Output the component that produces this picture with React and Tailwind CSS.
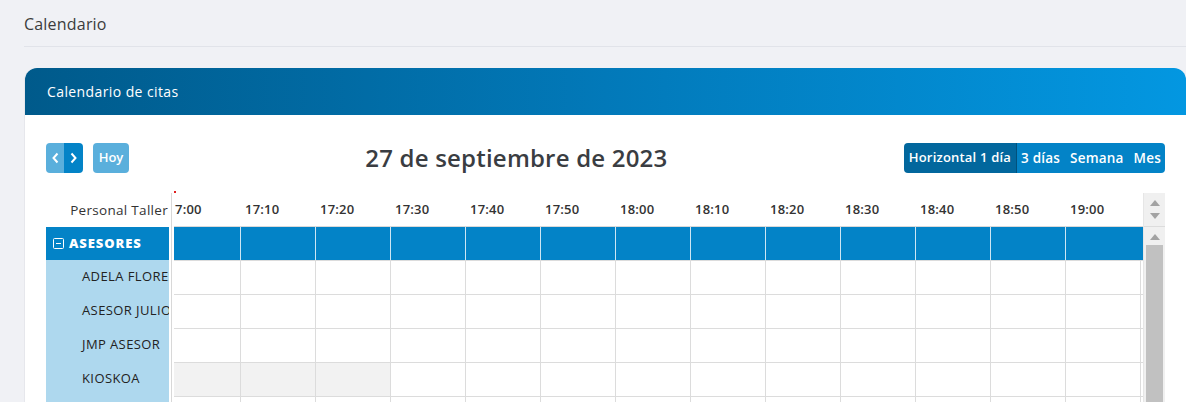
import React from 'react';

const times = ['7:00', '17:10', '17:20', '17:30', '17:40', '17:50', '18:00', '18:10', '18:20', '18:30', '18:40', '18:50', '19:00'];
const people = [
  { name: 'ADELA FLORES', grey: 0 },
  { name: 'ASESOR JULIO', grey: 0 },
  { name: 'JMP ASESOR', grey: 0 },
  { name: 'KIOSKOA', grey: 3 },
  { name: '', grey: 0 },
];

const colWidth = (i) => (i === 0 ? 'w-[67px]' : 'w-[75px]');

function Toolbar() {
  return (
    <div className="flex items-center h-[30px]">
      <div className="flex gap-[10px]">
        <div className="flex rounded-[4px] overflow-hidden h-[30px]">
          <button className="w-[18px] bg-[#5aafdc] flex items-center justify-center">
            <svg width="9" height="12" viewBox="0 0 9 12"><path d="M6.5 1.5 2.5 6l4 4.5" fill="none" stroke="#fff" strokeWidth="2" /></svg>
          </button>
          <button className="w-[19px] bg-[#0383c7] flex items-center justify-center">
            <svg width="9" height="12" viewBox="0 0 9 12"><path d="M2.5 1.5 6.5 6l-4 4.5" fill="none" stroke="#fff" strokeWidth="2" /></svg>
          </button>
        </div>
        <button className="h-[30px] w-[36px] rounded-[4px] bg-[#5aafdc] text-white text-[13px] font-semibold">Hoy</button>
      </div>
      <div className="flex-1 text-center text-[24px] font-semibold text-[#3a3d42] tracking-[0.2px]">27 de septiembre de 2023</div>
      <div className="flex rounded-[4px] overflow-hidden h-[30px] text-white text-[13px] font-semibold tracking-[0.2px]">
        <div className="bg-[#02679d] px-[5px] flex items-center border-r border-[#01517c]">Horizontal 1 día</div>
        <div className="bg-[#0383c7] flex items-center gap-[10px] pl-[4px] pr-[4px] text-[13.5px]">
          <span>3 días</span>
          <span>Semana</span>
          <span>Mes</span>
        </div>
      </div>
    </div>
  );
}

function Grid() {
  return (
    <div className="flex mt-[20px] text-[#222]">
      <div className="w-[123px] shrink-0">
        <div className="h-[34px] flex items-center justify-end overflow-hidden whitespace-nowrap text-[13.5px] tracking-[0.3px] font-medium text-[#333] pr-[1px]">Personal Taller</div>
        <div className="h-[33px] bg-[#0383c7] flex items-center pl-[7px] gap-[5px] text-white">
          <svg width="11" height="11" viewBox="0 0 11 11"><rect x="0.5" y="0.5" width="10" height="10" rx="1" fill="none" stroke="#fff" strokeWidth="1" /><path d="M3 5.5h5" stroke="#fff" strokeWidth="1" /></svg>
          <span className="text-[13px] font-extrabold tracking-[0.9px]">ASESORES</span>
        </div>
        <div className="bg-[#aed8ee]">
          {people.map((p, i) => (
            <div key={i} className="h-[34px] flex items-center pl-[36px] overflow-hidden whitespace-nowrap text-[13px] tracking-[0.4px]">{p.name}</div>
          ))}
        </div>
      </div>
      <div className="w-[5px] shrink-0 flex justify-center">
        <div className="w-[1px] bg-[#d8d8d8] ml-[-1px]" />
      </div>
      <div className="flex-1 relative">
        <div className="absolute left-0 top-[-2px] w-[2px] h-[2px] bg-[#e02020]" />
        <div className="flex h-[34px] border-b border-[#d9d9d9]">
          {times.map((t, i) => (
            <div key={t} className={`${colWidth(i)} shrink-0 flex items-center text-[13px] font-semibold text-[#333] tracking-[0.2px] ${i === 0 ? 'pl-[1px]' : 'pl-[4px]'}`}>{t}</div>
          ))}
        </div>
        <div className="flex h-[33px] bg-[#0383c7]">
          {times.map((t, i) => (
            <div key={t} className={`${colWidth(i)} shrink-0 ${i < times.length - 1 ? 'border-r border-white/80' : ''}`} />
          ))}
        </div>
        {people.map((p, r) => (
          <div key={r} className="flex h-[34px] border-t border-[#dcdcdc]">
            {times.map((t, i) => (
              <div key={t} className={`${colWidth(i)} shrink-0 border-r border-[#dcdcdc] ${i < p.grey ? 'bg-[#f2f2f2]' : 'bg-white'}`} />
            ))}
          </div>
        ))}
      </div>
      <div className="w-[22px] shrink-0 bg-[#f0f0f0] border-l border-[#e6e6e6]">
        <div className="h-[34px] flex flex-col items-center justify-center gap-[7px] border-b border-[#dcdcdc]">
          <svg width="10" height="6" viewBox="0 0 10 6"><path d="M0 6 5 0l5 6z" fill="#a3a3a3" /></svg>
          <svg width="10" height="6" viewBox="0 0 10 6"><path d="M0 0h10L5 6z" fill="#a3a3a3" /></svg>
        </div>
        <div className="flex flex-col items-center pt-[7px]">
          <svg width="10" height="6" viewBox="0 0 10 6"><path d="M0 6 5 0l5 6z" fill="#a3a3a3" /></svg>
          <div className="w-[17px] h-[200px] bg-[#c1c1c1] mt-[5px]" />
        </div>
      </div>
    </div>
  );
}

export default function App() {
  return (
    <div className="min-h-screen bg-[#f0f1f5] pl-[24px] overflow-hidden" style={{ fontFamily: '"Open Sans", "Liberation Sans", sans-serif' }}>
      <div className="h-[47px] pt-[2px] border-b border-[#e1e3e9] flex items-center text-[16px] tracking-[0.2px] text-[#3c3c3c]">Calendario</div>
      <div className="mt-[21px] w-[1162px] bg-white rounded-t-[12px] border-l border-[#e6e7ec]">
        <div className="h-[47px] rounded-t-[12px] bg-gradient-to-r from-[#005a8b] via-[#0279b9] to-[#0397e1] flex items-center pl-[22px] text-white text-[14px] font-medium tracking-[0.4px]">Calendario de citas</div>
        <div className="pl-[21px] pr-[21px] pt-[28px] pb-[20px]">
          <Toolbar />
          <Grid />
        </div>
      </div>
    </div>
  );
}
